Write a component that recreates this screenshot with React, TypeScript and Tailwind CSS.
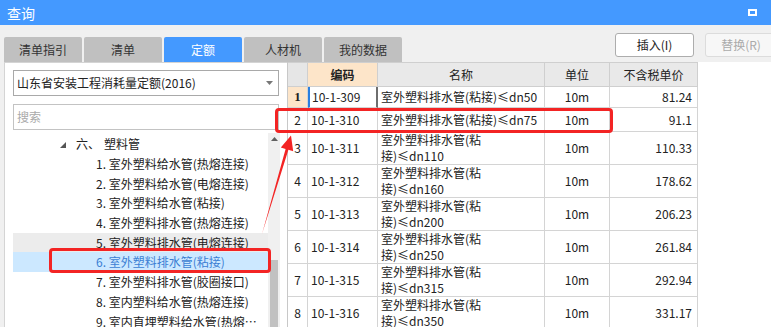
import React from "react";

const treeItems = [
  "1. 室外塑料给水管(热熔连接)",
  "2. 室外塑料给水管(电熔连接)",
  "3. 室外塑料给水管(粘接)",
  "4. 室外塑料排水管(热熔连接)",
  "5. 室外塑料排水管(电熔连接)",
  "6. 室外塑料排水管(粘接)",
  "7. 室外塑料排水管(胶圈接口)",
  "8. 室内塑料给水管(热熔连接)",
  "9. 室内直埋塑料给水管(热熔连接)",
];

const rows = [
  { n: 1, code: "10-1-309", name: ["室外塑料排水管(粘接)≤dn50"], price: "81.24" },
  { n: 2, code: "10-1-310", name: ["室外塑料排水管(粘接)≤dn75"], price: "91.1" },
  { n: 3, code: "10-1-311", name: ["室外塑料排水管(粘", "接)≤dn110"], price: "110.33" },
  { n: 4, code: "10-1-312", name: ["室外塑料排水管(粘", "接)≤dn160"], price: "178.62" },
  { n: 5, code: "10-1-313", name: ["室外塑料排水管(粘", "接)≤dn200"], price: "206.23" },
  { n: 6, code: "10-1-314", name: ["室外塑料排水管(粘", "接)≤dn250"], price: "261.84" },
  { n: 7, code: "10-1-315", name: ["室外塑料排水管(粘", "接)≤dn315"], price: "292.94" },
  { n: 8, code: "10-1-316", name: ["室外塑料排水管(粘", "接)≤dn350"], price: "331.17" },
];

const tabs = ["清单指引", "清单", "定额", "人材机", "我的数据"];

export default function App() {
  return (
    <div className="relative w-[771px] h-[327px] overflow-hidden bg-[#f0f0f0] font-['Noto_Sans_CJK_SC','Noto_Sans',sans-serif] text-[12px] text-[#222]">
      {/* Title bar */}
      <div className="h-[25px] bg-[#4499ff] flex items-center justify-between pl-[7px] pr-[14px]">
        <span className="text-white text-[14px] leading-none">查询</span>
        <div className="w-[9px] h-[7px] border-2 border-white" />
      </div>

      {/* Tabs + buttons */}
      <div className="h-[37px] flex pl-[4px]">
        <div className="flex items-end gap-[2px]">
          {tabs.map((t) => (
            <div
              key={t}
              className={
                t === "定额"
                  ? "w-[78px] h-[25px] rounded-t-[2px] bg-[#4499ff] text-white flex items-center justify-center text-[12px]"
                  : "w-[78px] h-[25px] rounded-t-[2px] bg-[#c0c0c0] text-[#333] flex items-center justify-center text-[12px]"
              }
            >
              {t}
            </div>
          ))}
        </div>
        <div className="ml-auto mt-[8px] flex gap-[11px] mr-[-6px]">
          <div className="w-[79px] h-[24px] bg-white border border-[#adadad] rounded-[3px] flex items-center justify-center text-[12px] text-[#222]">
            插入(I)
          </div>
          <div className="w-[72px] h-[24px] bg-[#f7f7f7] border border-[#dcdcdc] rounded-[3px] flex items-center justify-center text-[12px] text-[#aaa]">
            替换(R)
          </div>
        </div>
      </div>

      {/* Main */}
      <div className="flex h-[265px]">
        {/* Left panel */}
        <div className="ml-[4px] w-[283px] bg-white border-l border-t border-[#d4d4d4] pl-[8px] pr-[8px] pt-[7px] flex flex-col">
          <div className="h-[26px] border border-[#a9a9a9] bg-white flex items-center pl-[3px] pr-[5px]">
            <span className="flex-1 text-[12px] text-[#222]">山东省安装工程消耗量定额(2016)</span>
            <svg width="7" height="4" viewBox="0 0 7 4">
              <polygon points="0,0 7,0 3.5,4" fill="#777" />
            </svg>
          </div>
          <div className="mt-[8px] h-[26px] border border-[#c3c3c3] bg-white flex items-center pl-[3px] text-[12px] text-[#aaa]">
            搜索
          </div>
          <div className="mt-[3px] flex flex-1 mr-[-1px] overflow-hidden">
            <div className="w-[255px] flex flex-col">
              <div className="h-[21px] shrink-0 flex items-center pl-[47px]">
                <svg width="6" height="6" viewBox="0 0 6 6" className="mt-[3px]">
                  <polygon points="6,0 6,6 0,6" fill="#555" />
                </svg>
                <span className="ml-[10px]">六、</span>
                <span className="ml-[4px]">塑料管</span>
              </div>
              {treeItems.map((t, i) => (
                <div
                  key={t}
                  className={
                    i === 5
                      ? "h-[19.7px] shrink-0 flex items-center pl-[83px] bg-[#cce8ff] text-[#3b7fd4]"
                      : i === 4
                      ? "h-[19.7px] shrink-0 flex items-center pl-[83px] bg-[#ececec]"
                      : "h-[19.7px] shrink-0 flex items-center pl-[83px]"
                  }
                >
                  <span className="truncate w-[172px] block leading-[19.7px]">{t}</span>
                </div>
              ))}
            </div>
            <div className="w-[12px] bg-[#f0f0f0] flex flex-col">
              <div className="h-[12px] flex items-center justify-center">
                <svg width="7" height="4" viewBox="0 0 7 4">
                  <polygon points="0,4 7,4 3.5,0" fill="#606060" />
                </svg>
              </div>
              <div className="h-[115px]" />
              <div className="flex-1 mx-[2px] bg-[#c1c1c1]" />
            </div>
          </div>
        </div>

        {/* Table */}
        <div className="flex-1 bg-white border-l border-[#c8c8c8]">
          <div className="w-fit border-t border-[#cfcfcf]">
            <div className="grid grid-cols-[20px_70px_167px_65px_88px] h-[24px]">
              <div className="bg-[#e6e6e6] border-r border-b border-[#cfcfcf]" />
              <div className="bg-[#fde5c9] border-r border-b border-[#cfcfcf] flex items-center justify-center font-bold">编码</div>
              <div className="bg-[#e9e9e9] border-r border-b border-[#cfcfcf] flex items-center justify-center">名称</div>
              <div className="bg-[#e9e9e9] border-r border-b border-[#cfcfcf] flex items-center justify-center">单位</div>
              <div className="bg-[#e9e9e9] border-r border-b border-[#cfcfcf] flex items-center justify-center">不含税单价</div>
            </div>
            {rows.map((r) => (
              <div
                key={r.n}
                className={
                  r.n === 1
                    ? "grid grid-cols-[20px_70px_167px_65px_88px] h-[21px]"
                    : r.n === 2
                    ? "grid grid-cols-[20px_70px_167px_65px_88px] h-[24px]"
                    : "grid grid-cols-[20px_70px_167px_65px_88px] h-[33px]"
                }
              >
                <div
                  className={
                    r.n === 1
                      ? "bg-[#fde5c9] border-r border-b border-[#d4d4d4] flex items-center justify-center font-bold font-['Liberation_Serif',serif] text-[13px]"
                      : "bg-white border-r border-b border-[#d4d4d4] flex items-center justify-center"
                  }
                >
                  {r.n}
                </div>
                <div
                  className={
                    r.n === 1
                      ? "border-l-2 border-l-[#2a7fe0] border-r-2 border-r-[#6e6e6e] border-b border-b-[#d4d4d4] flex items-center pl-[2px]"
                      : "border-r border-b border-[#d4d4d4] flex items-center pl-[3px]"
                  }
                >
                  {r.code}
                </div>
                <div className="border-r border-b border-[#d4d4d4] flex flex-col justify-center pl-[3px] leading-[16px]">
                  {r.name.map((l) => (
                    <span key={l} className="whitespace-nowrap">{l}</span>
                  ))}
                </div>
                <div className="border-r border-b border-[#d4d4d4] flex items-center justify-center">10m</div>
                <div className="border-r border-b border-[#d4d4d4] flex items-center justify-end pr-[5px]">{r.price}</div>
              </div>
            ))}
          </div>
        </div>
      </div>

      {/* Annotations */}
      <div className="absolute left-[49px] top-[248px] w-[222px] h-[25px] border-[3px] border-[#f32424] rounded-[4px]" />
      <div className="absolute left-[275px] top-[108px] w-[338px] h-[25px] border-[3px] border-[#f32424] rounded-[4px]" />
      <svg className="absolute left-0 top-0" width="771" height="327" viewBox="0 0 771 327">
        <polygon
          points="262,234 285.6,149 280.8,147.6 291,135.5 293.2,151.3 288.4,149.8"
          fill="#f32424"
        />
      </svg>
    </div>
  );
}
